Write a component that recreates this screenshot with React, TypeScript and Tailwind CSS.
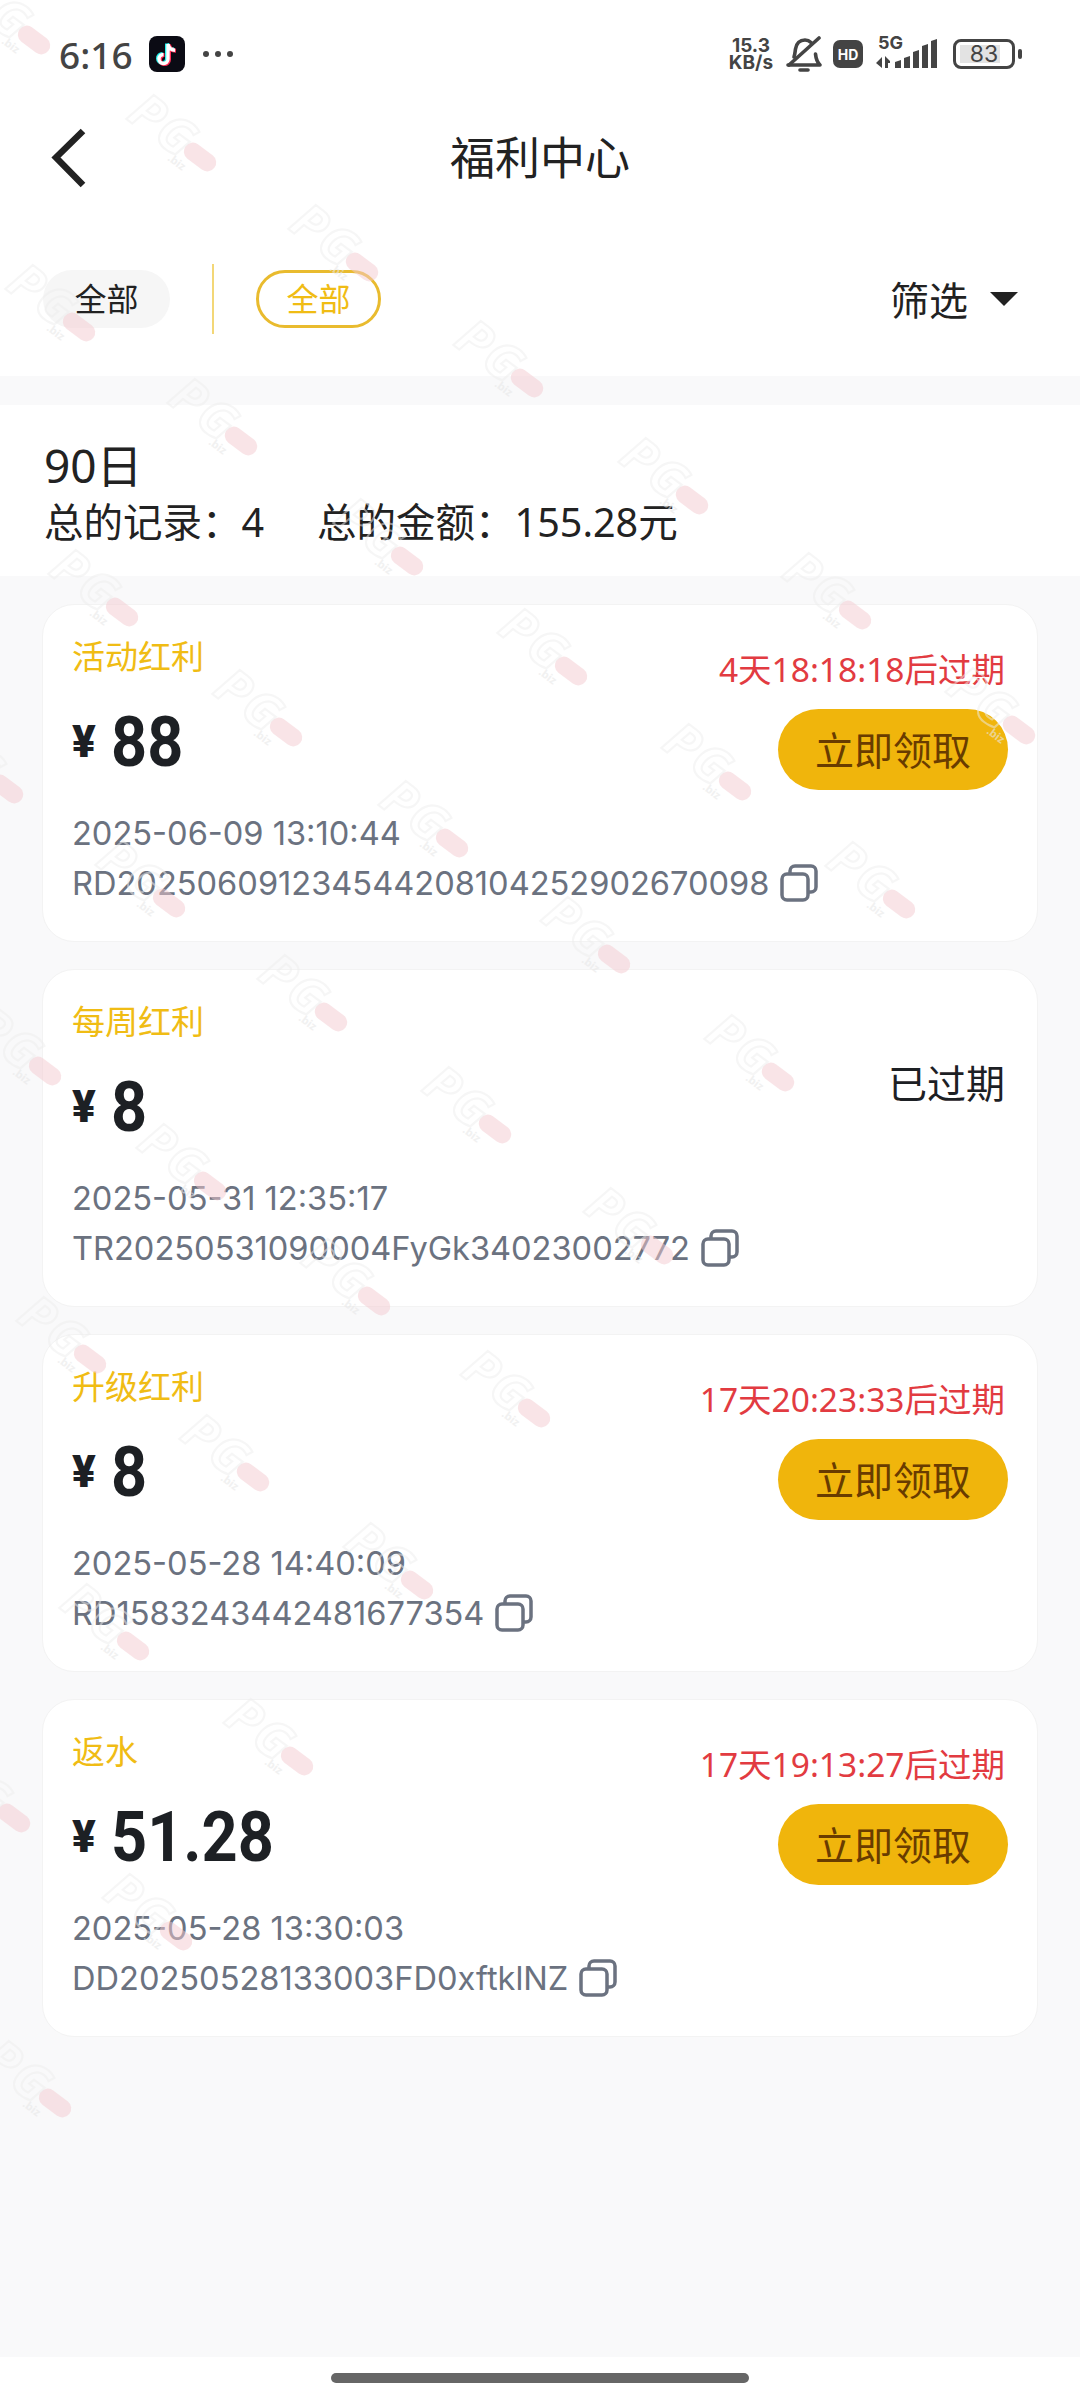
import React from 'react';

const FONT = "font-['Noto_Sans','Noto_Sans_CJK_SC',sans-serif]";

interface Reward {
  label: string;
  amount: string;
  date: string;
  code: string;
  expiry?: string;
}

const rewards: Reward[] = [
  { label: '活动红利', amount: '88', date: '2025-06-09 13:10:44', code: 'RD202506091234544208104252902670098', expiry: '4天18:18:18后过期' },
  { label: '每周红利', amount: '8', date: '2025-05-31 12:35:17', code: 'TR20250531090004FyGk3402300' + '2772' },
  { label: '升级红利', amount: '8', date: '2025-05-28 14:40:09', code: 'RD1583243442481677354', expiry: '17天20:23:33后过期' },
  { label: '返水', amount: '51.28', date: '2025-05-28 13:30:03', code: 'DD20250528133003FD0xftklNZ', expiry: '17天19:13:27后过期' },
];

// centre of the pink pill of every "PG" stamp on the screenshot
const stamps: [number, number][] = [
  [34, 40], [200, 157], [362, 267], [527, 383], [692, 500], [855, 615], [1019, 730],
  [79, 327], [241, 441], [407, 561], [571, 671], [735, 786], [899, 904],
  [122, 612], [286, 732], [452, 843], [614, 959], [778, 1077],
  [7, 789], [169, 903], [331, 1017], [495, 1129], [657, 1250],
  [45, 1071], [210, 1186], [374, 1301], [534, 1413],
  [90, 1359], [253, 1477], [417, 1585],
  [133, 1646], [297, 1761],
  [14, 1818], [176, 1936],
  [55, 2103],
];

const Stamp = ({ x, y }: { x: number; y: number }) => (
  <div className="absolute w-0 h-0 rotate-[37deg] pointer-events-none" style={{ left: x, top: y }}>
    <span className="absolute -left-[18px] -top-[9px] w-[36px] h-[18px] rounded-full bg-[#f3c9cf] opacity-50" />
    <span className="absolute right-[12px] -top-[30px] text-[50px] leading-none font-bold italic text-transparent [-webkit-text-stroke:2px_#eeeeee] opacity-50 tracking-[3px]">PG</span>
    <span className="absolute right-[6px] top-[12px] text-[11px] leading-none font-bold text-[#e8e8e8] opacity-60">.biz</span>
  </div>
);

const BackIcon = () => (
  <svg viewBox="0 0 36 60" className="absolute left-[50px] top-[56px] w-[36px] h-[60px]" fill="none" stroke="#222" strokeWidth="6.5">
    <path d="M33 3L6 29.500 33 57" />
  </svg>
);

const CopyIcon = () => (
  <svg viewBox="0 0 38 38" className="w-[38px] h-[38px] ml-[11px] shrink-0" fill="none" stroke="#6b7280" strokeWidth="3.5">
    <rect x="2" y="10" width="26" height="26" rx="5" />
    <path d="M10 10V7a5 5 0 0 1 5-5h16a5 5 0 0 1 5 5v16a5 5 0 0 1-5 5h-3" />
  </svg>
);

const TikTokIcon = () => (
  <svg viewBox="0 0 36 36" className="w-[36px] h-[36px] rounded-[8px] bg-[#0b0b14]">
    <path d="M19 8v15a4.500 4.500 0 1 1-4.500-4.500M19 8c.5 3.500 3 6 7 6.200" fill="none" stroke="#25f4ee" strokeWidth="4" transform="translate(-1 -0.6)" />
    <path d="M19 8v15a4.500 4.500 0 1 1-4.500-4.500M19 8c.5 3.500 3 6 7 6.200" fill="none" stroke="#fe2c55" strokeWidth="4" transform="translate(1 0.6)" />
    <path d="M19 8v15a4.500 4.500 0 1 1-4.500-4.500M19 8c.5 3.500 3 6 7 6.200" fill="none" stroke="#fff" strokeWidth="3.4" />
  </svg>
);

const MutedBell = () => (
  <svg viewBox="0 0 36 36" className="w-[36px] h-[36px]" fill="none" stroke="#444" strokeWidth="3.6" strokeLinecap="round" strokeLinejoin="round">
    <path d="M2 29h32c-3-3-4-6-4.500-11M8 21c1-3 1-5 1.500-8C10.500 7 14 4 19 4c2.500 0 4.500 1 6 2.500" />
    <path d="M3 29L33 2" />
    <path d="M14 34h8" />
  </svg>
);

const Signal = () => (
  <svg viewBox="0 0 64 32" className="w-[64px] h-[32px]" fill="#444">
    <path d="M6 19v11l-6-5zM9 18l5 5v2H12v5H9z" />
    <path d="M19 24l6-2v8h-6z" />
    <path d="M28 20l6-2v12h-6z" />
    <path d="M37 14l6-2v18h-6z" />
    <path d="M46 8l6-2v24h-6z" />
    <path d="M55 3l6-2v29h-6z" />
  </svg>
);

const StatusBar = () => (
  <div className="h-[72px] pt-[36px] pl-[59px] pr-[58px] flex items-center justify-between">
    <div className="flex items-center text-[#444]">
      <span className="text-[37px] leading-none font-medium w-[90px]">6:16</span>
      <TikTokIcon />
      <span className="ml-[18px] flex gap-[6px]">
        <i className="w-[6px] h-[6px] rounded-full bg-[#444]" />
        <i className="w-[6px] h-[6px] rounded-full bg-[#444]" />
        <i className="w-[6px] h-[6px] rounded-full bg-[#444]" />
      </span>
    </div>
    <div className="flex items-center text-[#444] font-['Inter']">
      <div className="text-[19px] leading-[17px] font-bold text-center w-[48px]">15.3<br />KB/s</div>
      <div className="ml-[11px]"><MutedBell /></div>
      <div className="ml-[11px] w-[30px] h-[28px] rounded-[7px] bg-[#444] text-white text-[14px] font-bold flex items-center justify-center">HD</div>
      <div className="ml-[13px] relative w-[64px] h-[32px]">
        <Signal />
        <span className="absolute left-[2px] -top-[4px] text-[18px] leading-none font-bold">5G</span>
      </div>
      <div className="ml-[13px] w-[62px] h-[30px] rounded-[8px] border-[3px] border-[#444] flex items-center pl-[4px] relative">
        <div className="w-[40px] h-[18px] bg-[#e3e3e3]" />
        <span className="absolute inset-0 flex items-center justify-center text-[23px] leading-none">83</span>
      </div>
      <div className="ml-[3px] w-[4px] h-[10px] rounded-sm bg-[#444]" />
    </div>
  </div>
);

const RewardCard = ({ r }: { r: Reward }) => (
  <div className="h-[338px] bg-white rounded-[32px] border border-[#f3f3f3] pl-[29px] pr-[30px] pt-[30px] relative">
    <div className="text-[33px] leading-[44px] text-[#f0bc14]">{r.label}</div>
    <div className="mt-[21px] flex items-center h-[84px]">
      <span className="text-[44px] font-black text-[#1d2024] leading-none w-[39px] font-['Roboto']">¥</span>
      <span className="inline-block origin-left scale-x-90 text-[70px] font-bold text-[#1d2024] leading-none font-['Roboto']">{r.amount}</span>
    </div>
    <div className="mt-[24px] text-[32.6px] leading-[50px] text-[#6b7280] font-['Inter']">{r.date}</div>
    <div className="flex items-center text-[32.6px] leading-[50px] text-[#6b7280] font-['Inter']">
      {r.code}
      <CopyIcon />
    </div>
    <div className="absolute top-[42px] right-[32px] flex flex-col items-end">
      {r.expiry ? (
        <>
          <div className="text-[33.5px] leading-[44px] text-[#e23b41]">{r.expiry}</div>
          <button className="mt-[18px] -mr-[3px] w-[230px] h-[81px] rounded-full bg-[#f0b50c] text-[#693c00] text-[39px] leading-none">立即领取</button>
        </>
      ) : (
        <div className="mt-[45px] text-[39px] leading-[52px] text-[#1d2024]">已过期</div>
      )}
    </div>
  </div>
);

export default function App() {
  return (
    <div className={`${FONT} relative w-[1080px] h-[2400px] overflow-hidden bg-[#f9f9fa]`}>
      <header className="h-[376px] bg-white">
        <StatusBar />
        <div className="relative h-[170px] flex items-center justify-center">
          <BackIcon />
          <h1 className="text-[45px] leading-none text-[#222]">福利中心</h1>
        </div>
        <div className="mt-[22px] flex items-center pl-[43px] pr-[62px] h-[70px]">
          <span className="w-[127px] h-[58px] rounded-full bg-[#f6f6f6] text-[#222] text-[32px] flex items-center justify-center">全部</span>
          <span className="ml-[42px] w-[2px] h-[70px] bg-[#f3d777]" />
          <span className="ml-[42px] w-[125px] h-[58px] rounded-full border-[3px] border-[#e9bb2e] text-[#f0bc14] text-[32px] flex items-center justify-center">全部</span>
          <span className="ml-auto text-[39px] text-[#222] leading-none">筛选</span>
          <span className="ml-[22px] w-0 h-0 border-x-[14px] border-x-transparent border-t-[14px] border-t-[#222]" />
        </div>
      </header>

      <section className="mt-[29px] h-[171px] bg-white px-[44px] pt-[33px]">
        <div className="text-[46px] leading-[54px] text-[#222]">90日</div>
        <div className="mt-[5px] text-[39.5px] leading-[50px] text-[#222] flex">
          <span>总的记录：4</span>
          <span className="ml-[53px]">总的金额：155.28元</span>
        </div>
      </section>

      <main className="mt-[28px] mx-[42px] flex flex-col gap-[27px]">
        {rewards.map((r) => (
          <RewardCard key={r.code} r={r} />
        ))}
      </main>

      <div className="absolute left-0 right-0 bottom-0 h-[43px] bg-white">
        <div className="mx-auto mt-[16px] w-[418px] h-[10px] rounded-full bg-[#666]" />
      </div>

      {stamps.map(([x, y]) => (
        <Stamp key={`${x}-${y}`} x={x} y={y} />
      ))}
    </div>
  );
}
